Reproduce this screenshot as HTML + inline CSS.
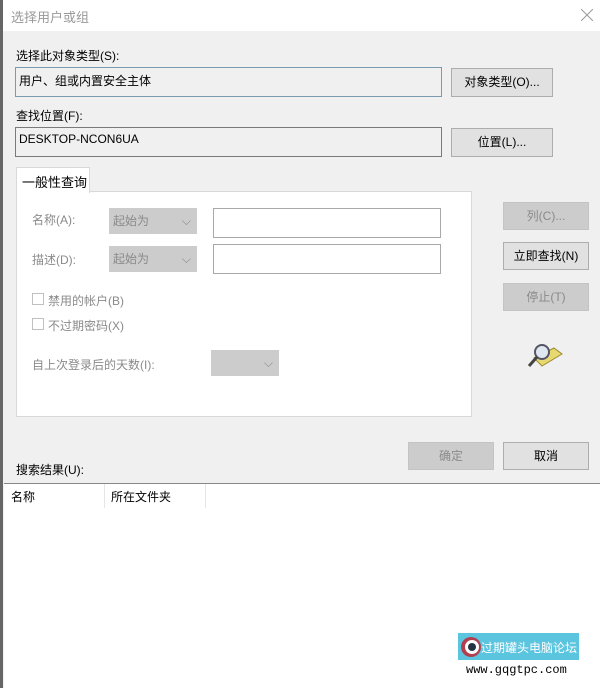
<!DOCTYPE html><html><head><meta charset="utf-8"><style>
body{margin:0;width:603px;height:688px;overflow:hidden;background:#fff;font-family:"Liberation Sans","Noto Sans CJK SC",sans-serif;font-size:12px;color:#000;position:relative}
div{position:absolute;box-sizing:border-box}
.t{white-space:nowrap}
.g{color:#8a8a8a}
.btn{background:#e1e1e1;border:1px solid #adadad;text-align:center;line-height:26px}
.dis{background:#cccccc;border:1px solid #c4c4c4;color:#8a8a8a}
.inp{background:#fff;border:1px solid #a8a8a8}
.cmb{background:#cccccc;color:#8a8a8a;padding-left:4px;line-height:26px}
.cb{width:12px;height:12px;border:1px solid #c0c0c0;background:#fff}
</style></head><body>
<div style="left:0;top:0;width:3px;height:688px;background:#666"></div>
<div style="left:3px;top:0;width:597px;height:688px;background:#f0f0f0"></div>
<div style="left:3px;top:0;width:597px;height:31px;background:#fff"></div>
<div class="t" style="left:11px;top:7px;color:#999;font-size:13px">选择用户或组</div>
<svg style="position:absolute;left:581px;top:9px" width="12" height="12"><path d="M0 0L12 12M12 0L0 12" stroke="#999" stroke-width="1"/></svg>
<div class="t" style="left:16px;top:47px">选择此对象类型(S):</div>
<div class="inp" style="left:15px;top:67px;width:427px;height:30px;background:#f0f0f0;border-color:#7a9ab0"></div>
<div class="t" style="left:19px;top:72px">用户、组或内置安全主体</div>
<div class="btn" style="left:451px;top:68px;width:102px;height:29px">对象类型(O)...</div>
<div class="t" style="left:16px;top:107px">查找位置(F):</div>
<div class="inp" style="left:15px;top:127px;width:427px;height:30px;background:#f0f0f0;border-color:#7a7a7a"></div>
<div class="t" style="left:19px;top:132px">DESKTOP-NCON6UA</div>
<div class="btn" style="left:451px;top:128px;width:102px;height:29px">位置(L)...</div>
<div style="left:16px;top:191px;width:456px;height:226px;background:#fff;border:1px solid #d9d9d9"></div>
<div style="left:16px;top:167px;width:74px;height:26px;background:#fff;border:1px solid #d9d9d9;border-bottom:none"></div>
<div class="t" style="left:22px;top:172px;font-size:13px">一般性查询</div>
<div class="t g" style="left:32px;top:211px">名称(A):</div>
<div class="cmb" style="left:109px;top:208px;width:88px;height:26px">起始为<span style="position:absolute;right:6px">⌵</span></div>
<div class="inp" style="left:213px;top:208px;width:228px;height:30px"></div>
<div class="t g" style="left:32px;top:251px">描述(D):</div>
<div class="cmb" style="left:109px;top:246px;width:88px;height:26px">起始为<span style="position:absolute;right:6px">⌵</span></div>
<div class="inp" style="left:213px;top:244px;width:228px;height:30px"></div>
<div class="cb" style="left:32px;top:293px"></div><div class="t g" style="left:48px;top:292px">禁用的帐户(B)</div>
<div class="cb" style="left:32px;top:318px"></div><div class="t g" style="left:48px;top:317px">不过期密码(X)</div>
<div class="t g" style="left:32px;top:356px">自上次登录后的天数(I):</div>
<div class="cmb" style="left:211px;top:350px;width:68px;height:26px"><span style="position:absolute;right:6px">⌵</span></div>
<div class="btn dis" style="left:503px;top:202px;width:86px;height:28px">列(C)...</div>
<div class="btn" style="left:503px;top:242px;width:86px;height:28px">立即查找(N)</div>
<div class="btn dis" style="left:503px;top:283px;width:86px;height:28px">停止(T)</div>
<svg style="position:absolute;left:526px;top:340px" width="38" height="30"><polygon points="8,18 28,8 36,14 16,26" fill="#e8d870" stroke="#9a8a30"/><circle cx="16" cy="12" r="7" fill="#dfe8f0" stroke="#556" stroke-width="2"/><line x1="11" y1="17" x2="3" y2="26" stroke="#444" stroke-width="3"/></svg>
<div class="btn dis" style="left:408px;top:442px;width:86px;height:28px">确定</div>
<div class="btn" style="left:503px;top:442px;width:86px;height:28px">取消</div>
<div class="t" style="left:16px;top:461px">搜索结果(U):</div>
<div style="left:4px;top:483px;width:596px;height:205px;background:#fff;border-top:1px solid #888"></div>
<div class="t" style="left:11px;top:488px">名称</div>
<div style="left:104px;top:484px;width:1px;height:24px;background:#e5e5e5"></div>
<div class="t" style="left:111px;top:488px">所在文件夹</div>
<div style="left:205px;top:484px;width:1px;height:24px;background:#e5e5e5"></div>
<div style="left:458px;top:633px;width:121px;height:27px;background:#5bc4de"></div>
<svg style="position:absolute;left:460px;top:635px" width="22" height="24"><circle cx="11" cy="12" r="10" fill="#b04050"/><circle cx="12" cy="12" r="7" fill="#fff"/><circle cx="12" cy="12" r="4" fill="#234"/></svg>
<div class="t" style="left:481px;top:639px;color:#fff;font-size:12px">过期罐头电脑论坛</div>
<div class="t" style="left:466px;top:663px;font-size:12px;font-family:'Liberation Mono',monospace">www.gqgtpc.com</div>
</body></html>
